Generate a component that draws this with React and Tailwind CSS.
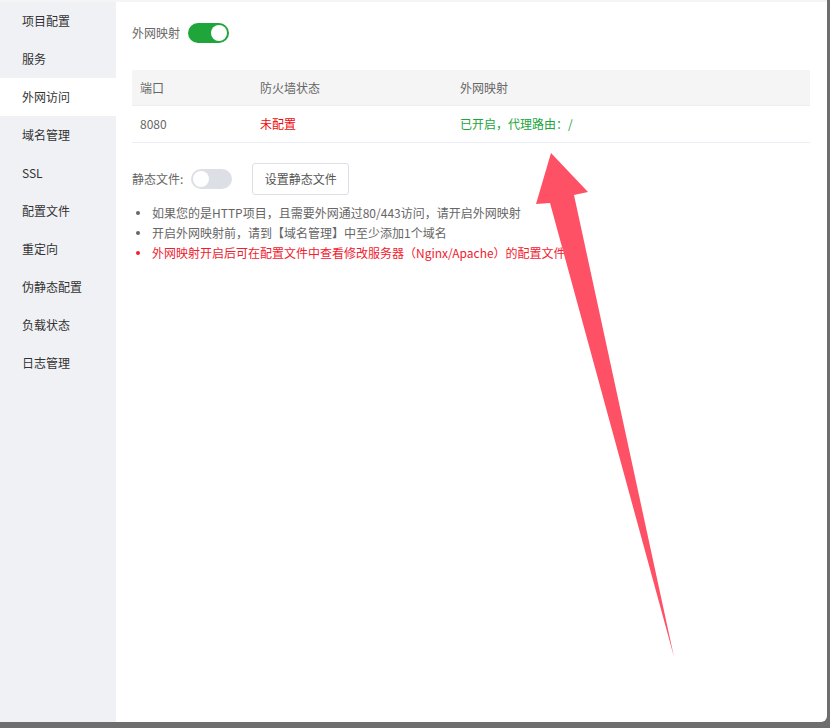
const menu = [
  "项目配置",
  "服务",
  "外网访问",
  "域名管理",
  "SSL",
  "配置文件",
  "重定向",
  "伪静态配置",
  "负载状态",
  "日志管理",
];

const tips = [
  { text: "如果您的是HTTP项目，且需要外网通过80/443访问，请开启外网映射", red: false },
  { text: "开启外网映射前，请到【域名管理】中至少添加1个域名", red: false },
  { text: "外网映射开启后可在配置文件中查看修改服务器（Nginx/Apache）的配置文件", red: true },
];

function Toggle({ on }) {
  return (
    <span
      className={`relative inline-flex h-[20px] w-[41px] items-center rounded-full ${
        on ? "bg-[#20a53a]" : "bg-[#dcdfe6]"
      }`}
    >
      <span
        className={`absolute top-[2px] h-[16px] w-[16px] rounded-full bg-white ${
          on ? "left-[23px]" : "left-[2px]"
        }`}
      />
    </span>
  );
}

export default function App() {
  return (
    <div className="relative h-[728px] w-[830px] overflow-hidden bg-[#6e6e6e] font-['Noto_Sans_CJK_SC',sans-serif] text-[12px]">
      <div className="flex h-[722px] w-[827px] flex-col overflow-hidden rounded-br-[6px] bg-white">
        <div className="h-[2px] bg-[#f5f5f5]" />
        <div className="flex flex-1">
          {/* 左侧菜单 */}
          <div className="w-[116px] bg-[#f0f1f5]">
            {menu.map((m) => (
              <div
                key={m}
                className={`flex h-[38px] items-center pl-[22px] text-[#333] ${
                  m === "外网访问" ? "bg-white" : ""
                }`}
              >
                {m}
              </div>
            ))}
          </div>

          {/* 内容 */}
          <div className="flex-1 pl-[16px] pr-[17px] pt-[21px]">
            <div className="flex h-[20px] items-center gap-[8px] text-[#666]">
              <span>外网映射</span>
              <Toggle on />
            </div>

            <div className="mt-[27px]">
              <div className="flex h-[36px] items-center border-b border-[#ebeef5] bg-[#f5f5f5] text-[#666]">
                <div className="w-[128px] pl-[8px]">端口</div>
                <div className="w-[200px]">防火墙状态</div>
                <div>外网映射</div>
              </div>
              <div className="flex h-[37px] items-center border-b border-[#ebeef5]">
                <div className="w-[128px] pl-[8px] text-[#666]">8080</div>
                <div className="w-[200px] text-[#ef0808]">未配置</div>
                <div className="text-[#20a53a]">已开启，代理路由：/</div>
              </div>
            </div>

            <div className="mt-[20px] flex h-[32px] items-center">
              <span className="text-[#666]">静态文件:</span>
              <span className="ml-[8px] flex">
                <Toggle on={false} />
              </span>
              <button className="ml-[20px] h-[32px] w-[97px] rounded-[3px] border border-[#dcdfe6] bg-white text-[#555]">
                设置静态文件
              </button>
            </div>

            <ul className="mt-[8px]">
              {tips.map((t) => (
                <li
                  key={t.text}
                  className={`flex h-[20px] items-center ${t.red ? "text-[#f0212f]" : "text-[#666]"}`}
                >
                  <span
                    className={`ml-[4px] mr-[12px] h-[4px] w-[4px] rounded-full ${
                      t.red ? "bg-[#f0212f]" : "bg-[#666]"
                    }`}
                  />
                  {t.text}
                </li>
              ))}
            </ul>
          </div>
        </div>
      </div>

      {/* 红色箭头标注 */}
      <svg className="pointer-events-none absolute left-0 top-0" width="830" height="728">
        <polygon
          points="551,153 588,192 574,195 674,657 550,203 536,204"
          fill="#ff5166"
        />
      </svg>
    </div>
  );
}
